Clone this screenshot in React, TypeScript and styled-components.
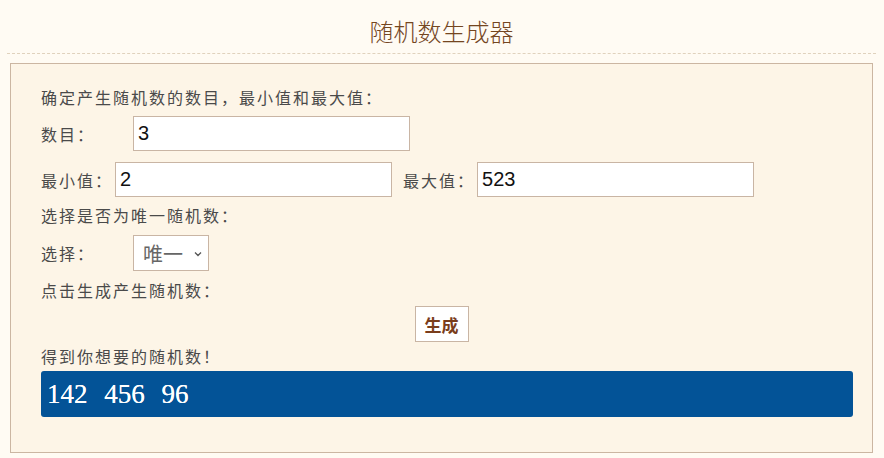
import { createGlobalStyle, styled } from "styled-components";

const GlobalStyle = createGlobalStyle`
  html, body {
    margin: 0;
    padding: 0;
    background-color: #fffbf3;
  }
  body {
    font-family: "Noto Sans CJK SC", "Noto Serif CJK SC", serif;
  }
`;

const Page = styled.div`
  width: 884px;
  height: 458px;
  box-sizing: border-box;
  padding: 0 11px 0 10px;
`;

const Header = styled.div`
  margin: 0 -3px;
  height: 54px;
  border-bottom: 1px dashed #e0d2bd;
  display: flex;
  align-items: flex-end;
  justify-content: center;
  box-sizing: border-box;
  padding-bottom: 7px;
`;

const Title = styled.h1`
  margin: 0;
  font-family: "Noto Sans CJK SC", sans-serif;
  font-weight: 300;
  font-size: 24px;
  line-height: 30px;
  color: #74461f;
`;

const Panel = styled.div`
  margin-top: 9px;
  height: 390px;
  box-sizing: border-box;
  border: 1px solid #cbb6a2;
  background-color: #fdf5e7;
  padding: 22px 19px 0 30px;
  display: flex;
  flex-direction: column;
`;

const Line = styled.div<{ $top: number }>`
  margin-top: ${(p) => p.$top}px;
  font-size: 16px;
  letter-spacing: 2px;
  line-height: 22px;
  color: #4a4a4a;
`;

const Row = styled.div<{ $top: number }>`
  margin-top: ${(p) => p.$top}px;
  display: flex;
  align-items: center;
  font-size: 16px;
  letter-spacing: 2px;
  color: #4a4a4a;
`;

const Label = styled.span<{ $width?: number }>`
  width: ${(p) => (p.$width ? `${p.$width}px` : "auto")};
  margin-right: ${(p) => (p.$width ? 0 : 2)}px;
  flex-shrink: 0;
`;

const TextInput = styled.input`
  width: 277px;
  height: 35px;
  box-sizing: border-box;
  border: 1px solid #c9b5a4;
  background: #fff;
  padding: 0 4px;
  font-family: "Liberation Sans", Arial, sans-serif;
  font-size: 20px;
  letter-spacing: 0;
  color: #111;
  outline: none;
  margin-right: 11px;
`;

const SelectBox = styled.div`
  position: relative;
  width: 76px;
  height: 36px;
  box-sizing: border-box;
  border: 1px solid #c9b5a4;
  background: #fff;
  display: flex;
  align-items: center;
  padding-left: 9px;
  font-family: "Noto Sans CJK SC", sans-serif;
  font-size: 20px;
  letter-spacing: 0;
  color: #666;
`;

const Chevron = styled.svg`
  position: absolute;
  right: 6px;
  top: 15px;
`;

const ButtonRow = styled.div`
  margin: 5px -19px 0 -30px;
  display: flex;
  justify-content: center;
`;

const Button = styled.button`
  width: 54px;
  height: 36px;
  box-sizing: border-box;
  border: 1px solid #c9b5a4;
  background: #fff;
  font-family: "Noto Sans CJK SC", sans-serif;
  font-weight: 700;
  font-size: 17px;
  color: #7a3d1b;
  padding: 0;
`;

const Result = styled.div`
  margin-top: 4px;
  height: 46px;
  width: 812px;
  box-sizing: border-box;
  border-radius: 3px;
  background-color: #035397;
  color: #fff;
  font-family: "Liberation Serif", serif;
  font-size: 27px;
  display: flex;
  align-items: center;
  padding-left: 6px;
  word-spacing: 10px;
  text-shadow: 0 0 0.4px #fff;
`;

function App() {
  return (
    <>
      <GlobalStyle />
      <Page>
        <Header>
          <Title>随机数生成器</Title>
        </Header>
        <Panel>
          <Line $top={0}>确定产生随机数的数目，最小值和最大值：</Line>
          <Row $top={8}>
            <Label $width={92}>数目：</Label>
            <TextInput defaultValue="3" />
          </Row>
          <Row $top={11}>
            <Label>最小值：</Label>
            <TextInput defaultValue="2" />
            <Label>最大值：</Label>
            <TextInput defaultValue="523" />
          </Row>
          <Line $top={7}>选择是否为唯一随机数：</Line>
          <Row $top={9}>
            <Label $width={92}>选择：</Label>
            <SelectBox>
              唯一
              <Chevron width="8" height="6" viewBox="0 0 8 6">
                <path d="M1 1.5 L4 4.5 L7 1.5" fill="none" stroke="#555" strokeWidth="1.3" />
              </Chevron>
            </SelectBox>
          </Row>
          <Line $top={8}>点击生成产生随机数：</Line>
          <ButtonRow>
            <Button>生成</Button>
          </ButtonRow>
          <Line $top={3}>得到你想要的随机数！</Line>
          <Result>142 456 96</Result>
        </Panel>
      </Page>
    </>
  );
}

export default App;
